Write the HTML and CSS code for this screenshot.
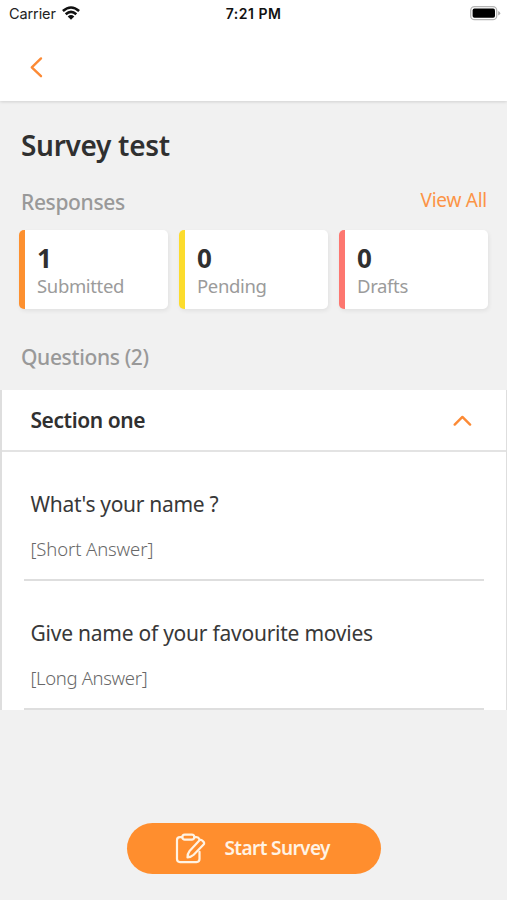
FILE: index.html
```html
<!DOCTYPE html>
<html lang="en">
<head>
<meta charset="utf-8">
<meta name="viewport" content="width=device-width">
<title>Survey test</title>
<link rel="stylesheet" href="styles.css">
</head>
<body>
<header class="top">
  <div class="status">
    <div class="carrier"><span>Carrier</span>
      <svg width="18" height="14" viewBox="0 0 18 14" fill="none" stroke="#111" stroke-width="2.6"><path d="M.9 5Q9-2 17.1 5M3.7 8.2Q9 3.5 14.3 8.2"/><path d="M9 13.7 5.7 10.4Q9 7.8 12.3 10.4Z" fill="#111" stroke="none"/></svg>
    </div>
    <time>7:21 PM</time>
    <svg class="battery" width="31" height="15" viewBox="0 0 31 15"><rect x=".7" y=".7" width="26" height="13" rx="3.8" fill="#fff" stroke="#b5b5b5" stroke-width="1.3"/><rect x="2.6" y="2.6" width="22.4" height="9.2" rx="1.8"/><path d="M28.2 5v4.6q2-.8 2-2.3t-2-2.3" fill="#aaa"/></svg>
  </div>
  <nav><svg width="14" height="22" viewBox="0 0 14 22" fill="none" stroke="#fc8a35" stroke-width="2.4" stroke-linecap="round" stroke-linejoin="round"><path d="M12 2.4 2.8 11.3l9.2 8.9"/></svg></nav>
</header>
<main>
  <h1>Survey test</h1>
  <div class="row"><h2>Responses</h2><a>View All</a></div>
  <section class="stats">
    <div class="stat orange"><b>1</b><span>Submitted</span></div>
    <div class="stat yellow"><b>0</b><span>Pending</span></div>
    <div class="stat red"><b>0</b><span>Drafts</span></div>
  </section>
  <h2 class="qhead">Questions (2)</h2>
  <section class="panel">
    <div class="section-head"><h3>Section one</h3>
      <svg width="20" height="12" viewBox="0 0 20 12" fill="none" stroke="#fc8a35" stroke-width="2.4" stroke-linecap="round" stroke-linejoin="round"><path d="m2.7 10.6 7.7-7.7 7.7 7.7"/></svg>
    </div>
    <article><p class="q">What's your name ?</p><p class="hint short">[Short Answer]</p></article>
    <article><p class="q long">Give name of your favourite movies</p><p class="hint">[Long Answer]</p></article>
  </section>
</main>
<footer><button type="button">
  <svg width="32" height="32" viewBox="0 0 32 32" fill="none" stroke="#fff3e4" stroke-width="2.2" stroke-linecap="round" stroke-linejoin="round"><path d="M8.3 4.2H6A3 3 0 0 0 3 7.2v18.9a3 3 0 0 0 3 3h16.5a3 3 0 0 0 3-3v-7.3M20.3 4.2h2.2a3 3 0 0 1 2.8 2"/><rect x="8.3" y="1.7" width="12" height="5" rx="2.5"/><path d="M25.3 7.4 15.6 18q-2.2 2.8-2.1 6.4 3.8-.3 6.2-2.6l9.9-10.3a1.8 1.8 0 0 0 0-2.6l-1.7-1.6a1.8 1.8 0 0 0-2.6.1Z"/></svg>
  <span>Start Survey</span></button></footer>
</body>
</html>
```
FILE: styles.css
```css
* { box-sizing: border-box; }
body { margin: 0; height: 900px; background: #f1f1f1; color: #303030; font-family: "Noto Sans", sans-serif; display: flex; flex-direction: column; overflow: hidden; }
h1, h2, h3, p { margin: 0; white-space: nowrap; }
svg { display: block; flex: none; }
.top { height: 101px; background: #fff; box-shadow: 0 1px 3px #0002; flex: none; }
.status { height: 28px; padding: 0 6px 0 9px; display: grid; grid-template-columns: 1fr auto 1fr; align-items: center; font: 14.5px/28px Inter, sans-serif; color: #222; }
.carrier { display: flex; gap: 6px; align-items: center; letter-spacing: -.1px; }
.carrier svg { margin-top: -2px; }
.status time { font-weight: 600; font-size: 14px; color: #111; letter-spacing: .5px; margin-left: -3px; }
.battery { justify-self: end; margin-top: -1px; }
nav { padding: 28px 0 0 29px; }
h1 { padding: 24px 21px 0; font-size: 28px; line-height: 40px; font-weight: 600; letter-spacing: -.3px; }
.row { display: flex; justify-content: space-between; padding: 21px 20px 0 21px; height: 65px; }
h2 { font-size: 21px; line-height: 32px; font-weight: 500; color: #999; letter-spacing: -.36px; }
.row a { font-size: 19px; line-height: 28px; color: #fc9446; letter-spacing: -.25px; }
.stats { padding: 0 19px; display: grid; grid-template-columns: repeat(3, 1fr); gap: 11px; }
.stat { height: 79px; background: #fff; border-left: 6px solid; border-radius: 5px; box-shadow: 1px 2px 4px #0001; padding: 13px 0 0 12px; }
.stat b { display: block; color: #303030; font-size: 26px; line-height: 31px; }
.stat span { display: block; color: #9b9b9b; font-size: 18.5px; line-height: 23px; letter-spacing: -.35px; }
.orange { border-color: #fd902f; }
.yellow { border-color: #fcdc2d; }
.red { border-color: #fd7770; }
.qhead { padding: 32px 21px 0; height: 81px; }
.panel { background: #fff; border: solid #dedede; border-width: 0 1px 0 2px; height: 320px; }
.section-head { height: 62px; border-bottom: 2px solid #e3e3e3; display: flex; align-items: center; justify-content: space-between; padding: 0 34px 0 28.5px; }
h3 { font-size: 21px; line-height: 30px; font-weight: 600; letter-spacing: -.43px; }
article { margin: 0 22px; padding: 36px 0 0 6.5px; height: 129px; border-bottom: 2px solid #dedede; }
.q { font-size: 21px; line-height: 32px; color: #383838; letter-spacing: -.3px; }
.long { letter-spacing: -.24px; }
.hint { margin-top: 15px; font-size: 18.5px; line-height: 28px; font-weight: 300; color: #686868; letter-spacing: -.35px; }
.short { letter-spacing: -.12px; }
footer { display: flex; justify-content: center; padding-top: 113px; }
button { width: 254px; height: 51px; border: 0; border-radius: 26px; background: #ff8e2e; color: #fff3e4; display: flex; align-items: center; padding: 0 0 0 47px; font: 600 19px/28px "Noto Sans", sans-serif; letter-spacing: -.6px; white-space: nowrap; }
button span { margin: -2px 0 0 19px; }
```
